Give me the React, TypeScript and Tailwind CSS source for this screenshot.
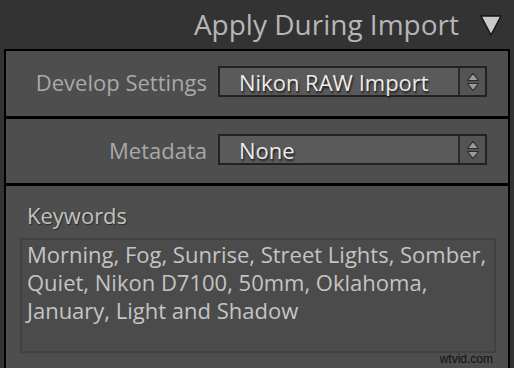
import React from "react";

function UpDown() {
  return (
    <svg width="14" height="20" viewBox="0 0 14 20">
      <path d="M7 1.5 L12.5 8.5 L1.5 8.5 Z" fill="#9c9c9c" stroke="#2e2e2e" strokeWidth="1.2" strokeLinejoin="round" />
      <path d="M7 18.5 L12.5 11.5 L1.5 11.5 Z" fill="#9c9c9c" stroke="#2e2e2e" strokeWidth="1.2" strokeLinejoin="round" />
    </svg>
  );
}

function Select({ value }: { value: string }) {
  return (
    <div className="flex h-[31px] w-[269px] border-2 border-[#222222] bg-[#5a5a5a]">
      <div className="flex flex-1 items-center pl-[19px] text-[22px] leading-none text-[#ececec] [text-shadow:1px_2px_2px_#1a1a1a] whitespace-nowrap">
        {value}
      </div>
      <div className="flex w-[27px] items-center justify-center border-l-2 border-[#2a2a2a] bg-[#545454]">
        <UpDown />
      </div>
    </div>
  );
}

export default function App() {
  return (
    <div className="h-[368px] w-[514px] overflow-hidden bg-[#333333] font-['Open_Sans',sans-serif]">
      <div className="flex h-[49px] items-center justify-end pr-[12px]">
        <span className="text-[28px] leading-[49px] text-[#b6b6b6] whitespace-nowrap">Apply During Import</span>
        <svg className="ml-[21px]" width="22" height="22" viewBox="0 0 22 22">
          <path d="M1 2 L21 2 L11 21 Z" fill="#c9c9c9" stroke="#151515" strokeWidth="1.5" strokeLinejoin="round" />
        </svg>
      </div>
      <div className="ml-[4px] w-[506px] border-x-2 border-t-2 border-black bg-[#4e4e4e]">
        <div className="h-[65px] pt-[15px]">
          <div className="flex items-center">
            <div className="w-[201px] text-right text-[22px] leading-none text-[#a9a9a9] whitespace-nowrap">Develop Settings</div>
            <div className="ml-[11px]">
              <Select value="Nikon RAW Import" />
            </div>
          </div>
        </div>
        <div className="h-[3px] bg-black" />
        <div className="h-[64px] pt-[15px]">
          <div className="flex items-center">
            <div className="w-[201px] text-right text-[22px] leading-none text-[#a9a9a9] whitespace-nowrap">Metadata</div>
            <div className="ml-[11px]">
              <Select value="None" />
            </div>
          </div>
        </div>
        <div className="h-[3px] bg-black" />
        <div className="h-[200px] pt-[14px]">
          <div className="pl-[21px] text-[22px] leading-[30px] text-[#c2c2c2] [text-shadow:1px_1px_1px_#2a2a2a]">Keywords</div>
          <div className="ml-[14px] mt-[8px] h-[115px] w-[476px] border-2 border-[#414141] bg-[#4b4b4b] pl-[5px] text-[22px] leading-[28px] text-[#c4c4c4]">
            <div className="whitespace-nowrap">Morning, Fog, Sunrise, Street Lights, Somber,</div>
            <div className="whitespace-nowrap">Quiet, Nikon D7100, 50mm, Oklahoma,</div>
            <div className="whitespace-nowrap">January, Light and Shadow</div>
          </div>
          <div className="w-[487px] text-right font-['Liberation_Sans',sans-serif] text-[12px] leading-[12px] text-[#111111]">wtvid.com</div>
        </div>
      </div>
    </div>
  );
}
